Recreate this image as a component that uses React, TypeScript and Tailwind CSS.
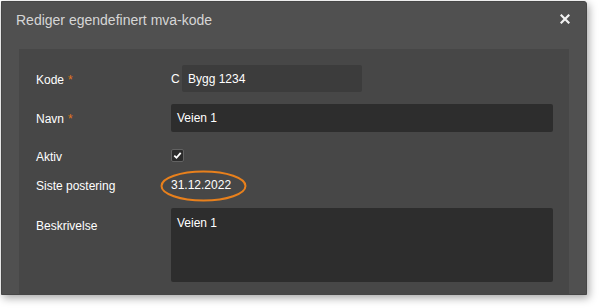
import React from 'react';

const font = { fontFamily: '"Liberation Sans", Arial, sans-serif' };

function Label({ text, required }: { text: string; required?: boolean }) {
  return (
    <span className="text-[12px] text-white">
      {text}
      {required && <span className="ml-[4px] text-[#e2761b]">*</span>}
    </span>
  );
}

export default function App() {
  return (
    <div className="w-[600px] h-[308px] bg-white overflow-hidden" style={font}>
      <div className="ml-[1px] mt-[1px] w-[586px] h-[294px] bg-[#505050] border border-[#464646] rounded-tr-[3px] shadow-[2px_3px_8px_rgba(0,0,0,0.35)] overflow-hidden flex flex-col">
        {/* header */}
        <div className="h-[47px] flex items-start justify-between pl-[14px] pr-[16px] pt-[9px]">
          <h1 className="text-[14px] text-[#d6d6d6] leading-[18px]">Rediger egendefinert mva-kode</h1>
          <button className="mt-[3px] text-white">
            <svg width="10" height="10" viewBox="0 0 10 10">
              <path d="M1.5 1.5 L8.5 8.5 M8.5 1.5 L1.5 8.5" stroke="#f2f2f2" strokeWidth="2.2" strokeLinecap="square" />
            </svg>
          </button>
        </div>

        {/* body */}
        <div className="ml-[17px] w-[550px] flex-1 bg-[#474747] pl-[17px] pr-[16px] pt-[16px]">
          <div className="flex items-center h-[27px]">
            <div className="w-[135px]"><Label text="Kode" required /></div>
            <span className="text-[12px] text-white w-[11px]">C</span>
            <div className="w-[180px] h-[27px] bg-[#3c3c3c] rounded-[2px] flex items-center pl-[6px] text-[12px] text-white">
              Bygg 1234
            </div>
          </div>

          <div className="flex items-center h-[28px] mt-[12px]">
            <div className="w-[135px]"><Label text="Navn" required /></div>
            <div className="flex-1 h-[28px] bg-[#2d2d2d] rounded-[2px] flex items-center pl-[6px] text-[12px] text-white">
              Veien 1
            </div>
          </div>

          <div className="flex items-center h-[27px] mt-[10px]">
            <div className="w-[135px]"><Label text="Aktiv" /></div>
            <div className="w-[13px] h-[13px] bg-[#2b2b2b] border border-[#626262] rounded-[2px] flex items-center justify-center">
              <svg width="9" height="9" viewBox="0 0 9 9">
                <path d="M1.3 4.6 L3.5 6.8 L7.7 1.9" fill="none" stroke="#ffffff" strokeWidth="1.8" />
              </svg>
            </div>
          </div>

          <div className="flex items-center h-[32px]">
            <div className="w-[135px]"><Label text="Siste postering" /></div>
            <div className="relative text-[12px] leading-[14px] text-white">
              31.12.2022
              <svg className="absolute left-[-11px] top-[-8px]" width="87" height="32" viewBox="0 0 87 32">
                <ellipse cx="43.5" cy="16" rx="42" ry="14.5" fill="none" stroke="#e8801c" strokeWidth="2" />
              </svg>
            </div>
          </div>

          <div className="flex items-start mt-[7px]">
            <div className="w-[135px] pt-[5px]"><Label text="Beskrivelse" /></div>
            <div className="flex-1 h-[74px] bg-[#2d2d2d] rounded-[2px] pl-[6px] pt-[6px] text-[12px] text-white">
              Veien 1
            </div>
          </div>
        </div>
      </div>
    </div>
  );
}
